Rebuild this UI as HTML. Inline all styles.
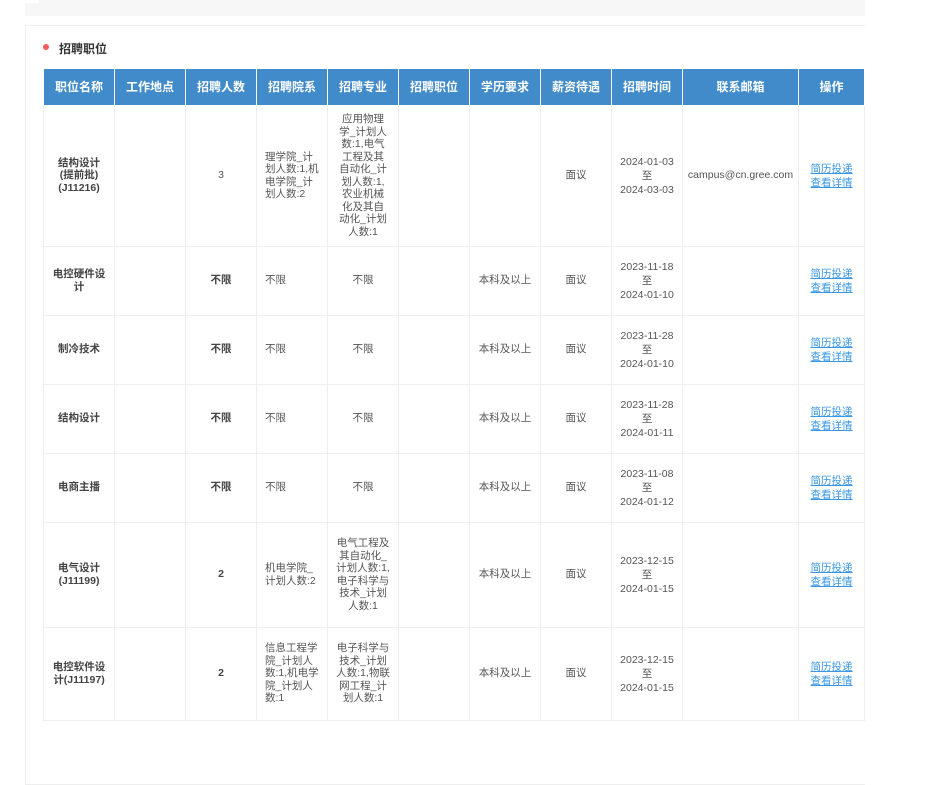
<!DOCTYPE html>
<html><head><meta charset="utf-8"><style>
*{margin:0;padding:0;box-sizing:border-box}
body{width:942px;height:728px;background:#fff;font-family:"Liberation Sans","Noto Sans CJK SC",sans-serif;position:relative;overflow:hidden}
.top{position:absolute;left:25px;top:0;width:840px;height:16px;background:#f7f7f7}
.top:before{content:"";position:absolute;left:0;top:0;width:14px;height:3px;background:#fff}
.card{position:absolute;left:25px;top:25px;width:840px;height:760px;border:1px solid #eee;border-right:none}
.title{position:absolute;left:59px;top:40px;font-size:12px;font-weight:bold;color:#333}
.dot{position:absolute;left:43px;top:44px;width:6px;height:6px;border-radius:50%;background:#f45c5c}
table{position:absolute;left:43px;top:69px;border-collapse:collapse;table-layout:fixed;width:822px}
th{background:#418bca;color:#fff;font-size:12px;font-weight:bold;height:36px;border:1px solid #fff;border-top:none}
td{border:1px solid #eee;font-size:10.5px;color:#555;text-align:center;line-height:12.5px;padding:0 8px;word-break:break-all}
td.n{font-weight:bold;color:#444}
td.l{text-align:left;padding:0 8px}
td.s{padding:0 9px}
td.k{line-height:14px;padding:0;white-space:nowrap}
a{color:#3a97e6;text-decoration:underline}
</style></head><body>
<div class="top"></div>
<div class="card"></div>
<div class="dot"></div><div class="title">招聘职位</div>
<table>
<colgroup><col style="width:71px"><col style="width:71px"><col style="width:71px"><col style="width:71px"><col style="width:71px"><col style="width:71px"><col style="width:71px"><col style="width:71px"><col style="width:71px"><col style="width:116px"><col style="width:66px"></colgroup>
<tr><th>职位名称</th><th>工作地点</th><th>招聘人数</th><th>招聘院系</th><th>招聘专业</th><th>招聘职位</th><th>学历要求</th><th>薪资待遇</th><th>招聘时间</th><th>联系邮箱</th><th>操作</th></tr>
<tr style="height:141px"><td class="n">结构设计<br>(提前批)<br>(J11216)</td><td></td><td>3</td><td class="l">理学院_计划人数:1,机电学院_计划人数:2</td><td class="s">应用物理学_计划人数:1,电气工程及其自动化_计划人数:1,农业机械化及其自动化_计划人数:1</td><td></td><td></td><td>面议</td><td class="k">2024-01-03<br>至<br>2024-03-03</td><td style="padding:0">campus@cn.gree.com</td><td class="k"><a>简历投递</a><br><a>查看详情</a></td></tr>
<tr style="height:69px"><td class="n">电控硬件设计</td><td></td><td class="n">不限</td><td class="l">不限</td><td>不限</td><td></td><td style="padding:0">本科及以上</td><td>面议</td><td class="k">2023-11-18<br>至<br>2024-01-10</td><td></td><td class="k"><a>简历投递</a><br><a>查看详情</a></td></tr>
<tr style="height:69px"><td class="n">制冷技术</td><td></td><td class="n">不限</td><td class="l">不限</td><td>不限</td><td></td><td style="padding:0">本科及以上</td><td>面议</td><td class="k">2023-11-28<br>至<br>2024-01-10</td><td></td><td class="k"><a>简历投递</a><br><a>查看详情</a></td></tr>
<tr style="height:69px"><td class="n">结构设计</td><td></td><td class="n">不限</td><td class="l">不限</td><td>不限</td><td></td><td style="padding:0">本科及以上</td><td>面议</td><td class="k">2023-11-28<br>至<br>2024-01-11</td><td></td><td class="k"><a>简历投递</a><br><a>查看详情</a></td></tr>
<tr style="height:69px"><td class="n">电商主播</td><td></td><td class="n">不限</td><td class="l">不限</td><td>不限</td><td></td><td style="padding:0">本科及以上</td><td>面议</td><td class="k">2023-11-08<br>至<br>2024-01-12</td><td></td><td class="k"><a>简历投递</a><br><a>查看详情</a></td></tr>
<tr style="height:105px"><td class="n">电气设计<br>(J11199)</td><td></td><td class="n">2</td><td class="l">机电学院_计划人数:2</td><td>电气工程及其自动化_计划人数:1,电子科学与技术_计划人数:1</td><td></td><td style="padding:0">本科及以上</td><td>面议</td><td class="k">2023-12-15<br>至<br>2024-01-15</td><td></td><td class="k"><a>简历投递</a><br><a>查看详情</a></td></tr>
<tr style="height:93px"><td class="n">电控软件设计(J11197)</td><td></td><td class="n">2</td><td class="l">信息工程学院_计划人数:1,机电学院_计划人数:1</td><td>电子科学与技术_计划人数:1,物联网工程_计划人数:1</td><td></td><td style="padding:0">本科及以上</td><td>面议</td><td class="k">2023-12-15<br>至<br>2024-01-15</td><td></td><td class="k"><a>简历投递</a><br><a>查看详情</a></td></tr>
</table>
</body></html>
